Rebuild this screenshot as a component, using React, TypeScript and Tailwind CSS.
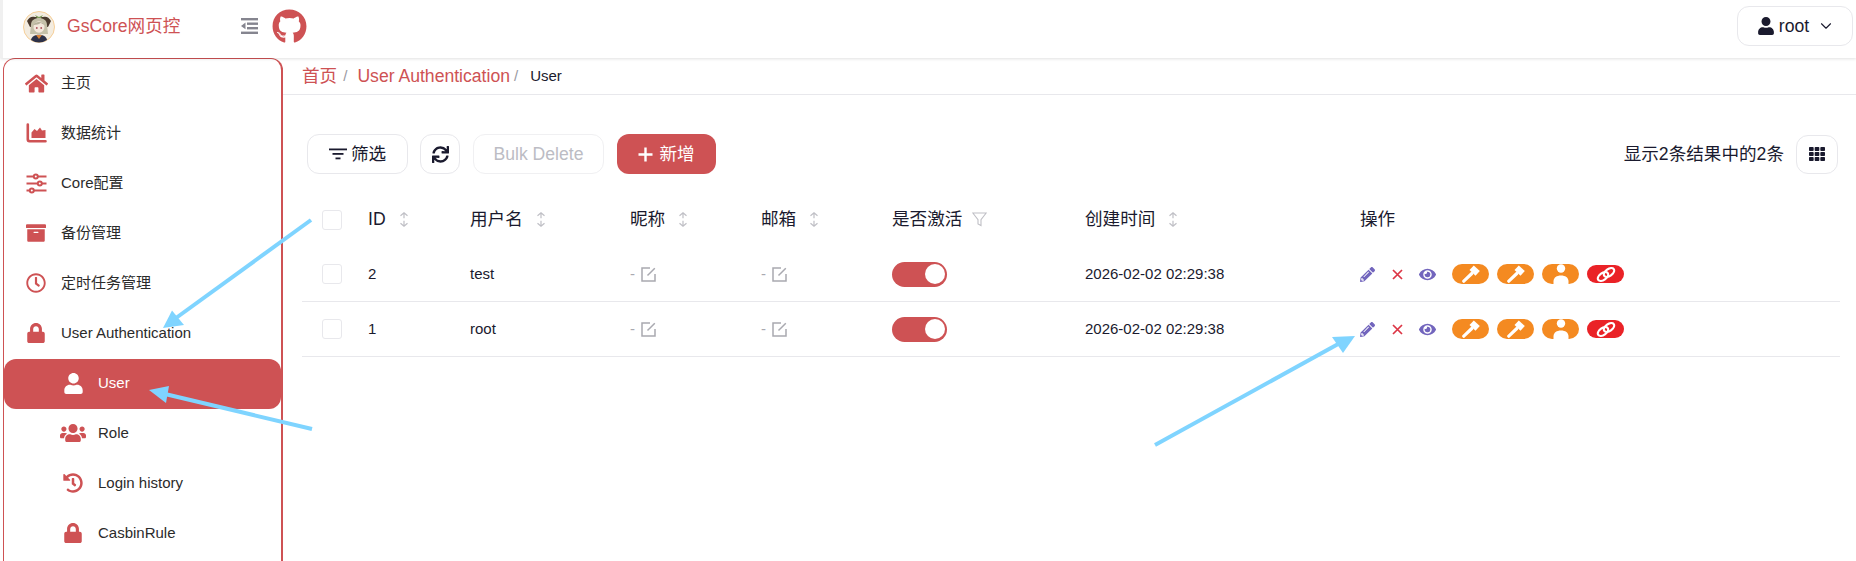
import * as React from 'react';
import {
  FaArchive,
  FaEye,
  FaGithub,
  FaHistory,
  FaHome,
  FaLock,
  FaPencilAlt,
  FaRegClock,
  FaSync,
  FaTh,
  FaUser,
  FaUsers,
} from 'react-icons/fa';
import { ChevronDown } from 'lucide-react';

const font = { fontFamily: '"Liberation Sans", "Noto Sans CJK SC", sans-serif' };

const ChartIcon = () => (
  <svg width="21" height="20" viewBox="0 0 21 20" fill="currentColor">
    <path d="M0.500 1.500a1.300 1.300 0 0 1 2.600 0V16a1 1 0 0 0 1 1h15.400a1.300 1.300 0 0 1 0 2.600H3.500a3 3 0 0 1-3-3z" />
    <path d="M5.500 15V9.500L8.500 6l2.500 2 3-3.500 2 3 3.500-.500V15z" />
  </svg>
);

const SlidersIcon = () => (
  <svg width="21" height="21" viewBox="0 0 21 21" fill="none" stroke="currentColor" strokeWidth="2">
    <path d="M0.500 3.500h7M12 3.500h8.500M0.500 10.500h11M16 10.500h4.500M0.500 17.500h3M8 17.500h12.500" />
    <circle cx="9.800" cy="3.500" r="2" />
    <circle cx="13.800" cy="10.500" r="2" />
    <circle cx="5.800" cy="17.500" r="2" />
  </svg>
);

const menu = [
  { label: '主页', icon: <FaHome size={23} /> },
  { label: '数据统计', icon: <ChartIcon /> },
  { label: 'Core配置', icon: <SlidersIcon /> },
  { label: '备份管理', icon: <FaArchive size={20} /> },
  { label: '定时任务管理', icon: <FaRegClock size={20} /> },
  { label: 'User Authentication', icon: <FaLock size={20} /> },
  { label: 'User', icon: <FaUser size={21} />, sub: true, active: true },
  { label: 'Role', icon: <FaUsers size={26} />, sub: true },
  { label: 'Login history', icon: <FaHistory size={20} />, sub: true },
  { label: 'CasbinRule', icon: <FaLock size={20} />, sub: true },
];

const rows = [
  { id: '2', name: 'test' },
  { id: '1', name: 'root' },
];

const cols = 'grid grid-cols-[66px_102px_160px_131px_131px_193px_275px_1fr] items-center';

const Avatar = () => (
  <svg width="32" height="32" viewBox="0 0 32 32">
    <circle cx="16" cy="16" r="15.500" fill="#f3ece0" stroke="#f6cf98" />
    <path d="M4 10c2-4 5-5 8-4l8 0c3-1 6 0 8 4l-3 6H7z" fill="#4a3a2e" />
    <path d="M8 14c0-5 4-7 8-7s8 2 8 7l1 9H7z" fill="#c4c0a8" />
    <ellipse cx="16" cy="16" rx="5.500" ry="5.800" fill="#f4e8dc" />
    <path d="M10.500 14c1-4 10-4 11 0-2-1-3-2-4-2-2 1.500-4 1.500-7 2z" fill="#b5b29a" />
    <path d="M12 4l4 2 4-2-2 3h-4z" fill="#7d9a58" />
    <circle cx="13.800" cy="17" r="0.900" fill="#a8505a" />
    <circle cx="18.200" cy="17" r="0.900" fill="#a8505a" />
    <path d="M8 29c1-7 15-7 16 0a15 15 0 0 1-16 0z" fill="#2d3148" />
    <path d="M13 24h6l-3 4z" fill="#d8843a" />
  </svg>
);

const Fold = () => (
  <svg width="17" height="16" viewBox="0 0 17 16" fill="#85858f">
    <rect x="0" y="0" width="17" height="2.400" />
    <rect x="6" y="4.500" width="11" height="2.400" />
    <rect x="6" y="9" width="11" height="2.400" />
    <rect x="0" y="13.600" width="17" height="2.400" />
    <path d="M4.500 4.500v6.800L0 8z" />
  </svg>
);

const Sorter = () => (
  <svg width="10" height="15" viewBox="0 0 10 15" fill="none" stroke="#bfbfc5" strokeWidth="1.200">
    <path d="M5 0.800v5.500M1.500 3.800 5 0.800l3.500 3M5 8.700v5.500M1.500 11.200 5 14.200l3.500-3" />
  </svg>
);

const FilterIcon = () => (
  <svg width="15" height="15" viewBox="0 0 15 15" fill="none" stroke="#bfbfc5" strokeWidth="1.100">
    <path d="M0.800 1h13.400L9 7.600v6l-3-1.600V7.600z" />
  </svg>
);

const EditNote = () => (
  <svg width="15" height="15" viewBox="0 0 15 15" fill="none" stroke="#a9a9b0" strokeWidth="1.500">
    <path d="M9 1H1v13h13V7" />
    <path d="M6.500 8.500 13.800 1.200" />
  </svg>
);

const Lines = () => (
  <svg width="18" height="12" viewBox="0 0 18 12" fill="#1a1a2e">
    <rect x="0" y="0.500" width="18" height="1.800" />
    <rect x="3.500" y="5" width="11" height="1.800" />
    <rect x="6.500" y="9.500" width="5" height="1.800" />
  </svg>
);

const Hammer = () => (
  <svg width="18" height="18" viewBox="0 0 18 18" fill="#ffffff">
    <path d="M7.500 5 11.800 0.500 17.800 6 13.500 10.800z" />
    <path d="M1.800 16.200 9.800 8.500" stroke="#ffffff" strokeWidth="3.200" strokeLinecap="round" />
  </svg>
);

const PersonFill = () => (
  <svg width="16" height="20" viewBox="0 0 16 20" fill="#ffffff">
    <circle cx="8" cy="4.500" r="4.200" />
    <path d="M0.500 20v-2.500c0-4 3.200-6 7.500-6s7.500 2 7.500 6V20z" />
  </svg>
);

const Chain = () => (
  <svg width="20" height="15" viewBox="0 0 20 15" fill="none" stroke="#ffffff" strokeWidth="2.200">
    <ellipse cx="7" cy="9.500" rx="5.800" ry="3.400" transform="rotate(-35 7 9.500)" />
    <ellipse cx="13" cy="5.500" rx="5.800" ry="3.400" transform="rotate(-35 13 5.500)" />
  </svg>
);

const Pill = ({ color, children }: { color: string; children: React.ReactNode }) => (
  <span className={`flex w-[37px] items-center justify-center overflow-hidden rounded-full text-white ${color}`}>
    {children}
  </span>
);

const Actions = () => (
  <div className="flex items-center">
    <FaPencilAlt size={15} className="text-[#7265bd]" />
    <svg width="11" height="11" viewBox="0 0 11 11" fill="none" stroke="#dc3545" strokeWidth="1.700" className="ml-[17px]">
      <path d="M1 1l9 9M10 1l-9 9" />
    </svg>
    <FaEye size={17} className="ml-[16px] text-[#7265bd]" />
    <div className="ml-[16px] flex items-center gap-2">
      <Pill color="h-5 bg-[#f48a21]"><Hammer /></Pill>
      <Pill color="h-5 bg-[#f48a21]"><Hammer /></Pill>
      <Pill color="h-5 bg-[#f48a21]"><PersonFill /></Pill>
      <Pill color="h-[18px] bg-[#ea2227]"><Chain /></Pill>
    </div>
  </div>
);

const Arrows = () => (
  <svg className="pointer-events-none absolute inset-0" width="1856" height="561">
    <g fill="#7fd4ff" stroke="none">
      <polygon points="163,328 172,310.500 184,325" />
      <polygon points="149,390 169,386 166,403" />
      <polygon points="1355,336 1343,353 1332,337" />
    </g>
    <g stroke="#7fd4ff" strokeWidth="4" fill="none">
      <path d="M311 220 176 318" />
      <path d="M312 429 165 394" />
      <path d="M1155 445 1340 343" />
    </g>
  </svg>
);

export default function App() {
  return (
    <div className="relative flex h-[561px] w-[1856px] flex-col overflow-hidden bg-white text-[#1a1a2e]" style={font}>
      <header className="z-10 flex h-[58px] shrink-0 items-center border-l-[3px] border-[#f0f0f0] pb-[6px] pr-[3px] shadow-[0_1px_3px_rgba(0,0,0,0.12)]">
        <div className="ml-5 mt-[2px]">
          <Avatar />
        </div>
        <span className="ml-[12px] w-[174px] text-[17.6px] text-[#ce5254]">GsCore网页控</span>
        <Fold />
        <FaGithub size={35} className="ml-[14px] text-[#ce5254]" />
        <button className="ml-auto flex h-[40px] w-[116px] items-center justify-center rounded-xl border border-[#e8e8ec] pl-[2px] text-[17.6px]">
          <FaUser size={18} />
          <span className="ml-1">root</span>
          <ChevronDown size={18} strokeWidth={1.500} className="ml-2" />
        </button>
      </header>

      <div className="flex min-h-0 flex-1">
        <aside className="ml-[3px] h-[520px] w-[280px] shrink-0 rounded-t-xl border-x-2 border-t border-[#ce5254] border-l-[1.5px] text-[#2b2b2b]">
          <div className="-mt-px">
            {menu.map((m) => (
              <div
                key={m.label}
                className={`flex h-[50px] items-center ${m.active ? '-mb-px mt-px rounded-xl bg-[#ce5254] pb-[2px] text-white' : ''}`}
              >
                <span
                  className={`flex w-[30px] shrink-0 justify-center ${m.sub ? 'ml-[54px]' : 'ml-[17px]'} ${m.active ? 'text-white' : 'text-[#ce5254]'}`}
                >
                  {m.icon}
                </span>
                <span className="ml-[10px] text-[15px]">{m.label}</span>
              </div>
            ))}
          </div>
        </aside>

        <main className="min-w-0 flex-1">
          <nav className="flex h-[37px] items-center border-b border-[#e8e8ec] pl-[19px]">
            <span className="text-[17.6px] text-[#ce5254]">首页</span>
            <span className="mx-1.5 text-[15px] text-[#9a9aa2]">/</span>
            <span className="ml-1 text-[17.6px] text-[#ce5254]">User Authentication</span>
            <span className="ml-[4px] text-[15px] text-[#9a9aa2]">/</span>
            <span className="ml-[12px] text-[15px]">User</span>
          </nav>

          <div className="mt-[39px] flex items-center pl-6 pr-[18px]">
            <button className="flex h-[40px] w-[101px] items-center justify-center gap-1 rounded-xl border border-[#e8e8ec] text-[17.6px]">
              <Lines />
              筛选
            </button>
            <button className="ml-3 flex h-[40px] w-[40px] items-center justify-center rounded-xl border border-[#e8e8ec]">
              <FaSync size={17} />
            </button>
            <button className="ml-[13px] h-[40px] w-[131px] rounded-xl border border-[#f0f0f2] text-[17.6px] text-[#bcbcc4]">
              Bulk Delete
            </button>
            <button className="ml-[13px] flex h-[40px] w-[99px] items-center justify-center gap-[6px] rounded-xl bg-[#ce5254] text-[17.6px] text-white">
              <svg width="15" height="15" viewBox="0 0 15 15" stroke="#ffffff" strokeWidth="2.400">
                <path d="M7.500 0.500v14M0.500 7.500h14" />
              </svg>
              新增
            </button>
            <span className="ml-auto text-[17.6px]">显示2条结果中的2条</span>
            <button className="ml-3 flex h-[39px] w-[42px] items-center justify-center rounded-xl border border-[#e8e8ec]">
              <FaTh size={16} />
            </button>
          </div>

          <div className="ml-[19px] mr-4 mt-[18px]">
            <div className={`${cols} h-[55px] text-[17.6px]`}>
              <span className="ml-[20px] h-5 w-5 rounded-[3px] border border-[#e8e8ec]" />
              <span className="flex items-center gap-[13px]">ID <Sorter /></span>
              <span className="flex items-center gap-[13px]">用户名 <Sorter /></span>
              <span className="flex items-center gap-[13px]">昵称 <Sorter /></span>
              <span className="flex items-center gap-[13px]">邮箱 <Sorter /></span>
              <span className="flex items-center gap-[10px]">是否激活 <FilterIcon /></span>
              <span className="flex items-center gap-[13px]">创建时间 <Sorter /></span>
              <span>操作</span>
            </div>
            {rows.map((r) => (
              <div key={r.id} className={`${cols} h-[55px] border-b border-[#e8e8ec] text-[15px]`}>
                <span className="ml-[20px] h-5 w-5 rounded-[3px] border border-[#e8e8ec]" />
                <span>{r.id}</span>
                <span>{r.name}</span>
                <span className="flex items-center gap-[6px] text-[#a9a9b0]">- <EditNote /></span>
                <span className="flex items-center gap-[6px] text-[#a9a9b0]">- <EditNote /></span>
                <span className="flex h-[25px] w-[55px] items-center justify-end rounded-full bg-[#ce5254] pr-[2px]">
                  <span className="h-[20px] w-[20px] rounded-full bg-white" />
                </span>
                <span>2026-02-02 02:29:38</span>
                <Actions />
              </div>
            ))}
          </div>
        </main>
      </div>

      <Arrows />
    </div>
  );
}
